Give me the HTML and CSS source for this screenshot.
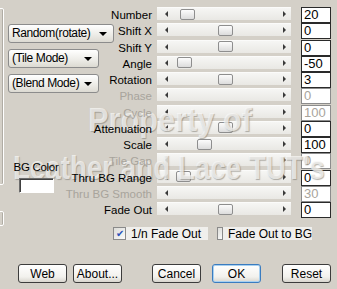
FILE: index.html
```html
<!DOCTYPE html>
<html lang="en">
<head>
    <meta charset="UTF-8">
    <title>Tile Settings</title>
    <link rel="stylesheet" href="styles.css">
</head>
<body>
<div class="dialog">
    <div class="main">
        <div class="left">
            <div class="edges">
                <div class="group group-top"></div>
                <div class="group group-bottom"></div>
            </div>
            <div class="controls">
                <div class="combo wide">Random(rotate)<span class="drop"></span></div>
                <div class="combo">(Tile Mode)<span class="drop"></span></div>
                <div class="combo">(Blend Mode)<span class="drop"></span></div>
                <div class="bgcolor">
                    <span class="bg-label">BG Color</span>
                    <div class="swatch"></div>
                </div>
            </div>
        </div>

        <div class="rows">
            <div class="row"><span class="label">Number</span><div class="track"><span class="arrow-l"></span><span class="thumb" style="margin-left:23px"></span><span class="arrow-r"></span></div><div class="value">20</div></div>
            <div class="row"><span class="label">Shift X</span><div class="track"><span class="arrow-l"></span><span class="thumb" style="margin-left:61px"></span><span class="arrow-r"></span></div><div class="value">0</div></div>
            <div class="row"><span class="label">Shift Y</span><div class="track"><span class="arrow-l"></span><span class="thumb" style="margin-left:61px"></span><span class="arrow-r"></span></div><div class="value">0</div></div>
            <div class="row"><span class="label">Angle</span><div class="track"><span class="arrow-l"></span><span class="thumb" style="margin-left:20px"></span><span class="arrow-r"></span></div><div class="value">-50</div></div>
            <div class="row"><span class="label">Rotation</span><div class="track"><span class="arrow-l"></span><span class="thumb" style="margin-left:61px"></span><span class="arrow-r"></span></div><div class="value">3</div></div>
            <div class="row off"><span class="label">Phase</span><div class="track"><span class="arrow-l"></span><span class="arrow-r"></span></div><div class="value">0</div></div>
            <div class="row off"><span class="label">Cycle</span><div class="track"><span class="arrow-l"></span><span class="arrow-r"></span></div><div class="value">100</div></div>
            <div class="row"><span class="label">Attenuation</span><div class="track"><span class="arrow-l"></span><span class="thumb" style="margin-left:61px"></span><span class="arrow-r"></span></div><div class="value">0</div></div>
            <div class="row"><span class="label">Scale</span><div class="track"><span class="arrow-l"></span><span class="thumb" style="margin-left:40px"></span><span class="arrow-r"></span></div><div class="value">100</div></div>
            <div class="row off"><span class="label">Tile Gap</span><div class="track"><span class="arrow-l"></span><span class="arrow-r"></span></div><div class="value">0</div></div>
            <div class="row"><span class="label">Thru BG Range</span><div class="track"><span class="arrow-l"></span><span class="thumb" style="margin-left:19px"></span><span class="arrow-r"></span></div><div class="value">0</div></div>
            <div class="row off"><span class="label">Thru BG Smooth</span><div class="track"><span class="arrow-l"></span><span class="arrow-r"></span></div><div class="value">30</div></div>
            <div class="row"><span class="label">Fade Out</span><div class="track"><span class="arrow-l"></span><span class="thumb" style="margin-left:61px"></span><span class="arrow-r"></span></div><div class="value">0</div></div>
        </div>
    </div>

    <div class="checks">
        <label class="check"><span class="box checked">&#10004;</span>1/n Fade Out</label>
        <label class="check"><span class="box"></span>Fade Out to BG</label>
    </div>

    <div class="buttons">
        <button class="btn web">Web</button>
        <button class="btn about">About...</button>
        <button class="btn cancel">Cancel</button>
        <button class="btn default">OK</button>
        <button class="btn">Reset</button>
    </div>

    <div class="watermark">
        <span class="wm-1">Property of</span>
        <span class="wm-2">Leather and Lace TUT's</span>
    </div>
</div>
</body>
</html>
```

FILE: styles.css
```css
body {
    margin: 0;
    background-color: #d4d0c8;
    font-family: "Liberation Sans", Arial, sans-serif;
    font-size: 11px;
    color: #000;
}
.dialog {
    position: relative;
    width: 337px;
    height: 289px;
    overflow: hidden;
}
.main {
    display: grid;
    grid-template-columns: 112px 1fr;
    height: 212px;
    padding-top: 7px;
}
.left {
    display: flex;
}
.edges {
    width: 8px;
    flex-shrink: 0;
}
.group {
    margin-left: -10px;
    width: 12px;
    border: 1px solid #fff;
    border-radius: 2px;
    box-shadow: inset -1px 0 0 #b0aca4;
}
.group-top {
    margin-top: 1px;
    height: 175px;
}
.group-bottom {
    margin-top: 26px;
    height: 13px;
}
.controls {
    display: flex;
    flex-direction: column;
    align-items: flex-start;
    padding-top: 17px;
}
.combo {
    position: relative;
    width: 86px;
    height: 17px;
    line-height: 17px;
    padding-left: 3px;
    margin-bottom: 6px;
    font-size: 12px;
    letter-spacing: -0.4px;
    border: 1px solid #8c8c8c;
    border-radius: 3px;
    background: linear-gradient(#ffffff, #ecebe6 60%, #dcdad2);
    white-space: nowrap;
}
.combo.wide {
    width: 101px;
}
.drop {
    position: absolute;
    right: 6px;
    top: 7px;
    border-left: 4px solid transparent;
    border-right: 4px solid transparent;
    border-top: 4px solid #000;
}
.bgcolor {
    display: flex;
    flex-direction: column;
    align-items: center;
    margin-top: 62px;
    margin-left: 9px;
    width: 38px;
}
.bg-label {
    position: relative;
    z-index: 2;
    font-size: 11.5px;
    letter-spacing: -0.3px;
    white-space: nowrap;
}
.swatch {
    position: relative;
    z-index: 2;
    margin-top: 5px;
    width: 33px;
    height: 13px;
    background: #fff;
    border: 1px solid;
    border-color: #6c6c6c #fff #fff #6c6c6c;
    box-shadow: inset 1px 1px 0 #404040;
}
.rows {
    display: flex;
    flex-direction: column;
}
.row {
    display: flex;
    align-items: center;
    height: 16.25px;
}
.label {
    position: relative;
    z-index: 2;
    width: 40px;
    display: flex;
    justify-content: flex-end;
    white-space: nowrap;
    font-size: 11.5px;
    margin-right: 5px;
}
.off .label {
    color: #a8a49c;
}
.track {
    position: relative;
    display: flex;
    align-items: center;
    width: 134px;
    height: 12px;
    margin-top: -3px;
    background: linear-gradient(#f6f6f4, #e9e8e4);
    border-top: 1px solid #fbfbfa;
}
.arrow-l {
    position: absolute;
    left: 8px;
    top: 3px;
    border-top: 3px solid transparent;
    border-bottom: 3px solid transparent;
    border-right: 3px solid #3a3a3a;
}
.arrow-r {
    position: absolute;
    right: 5px;
    top: 3px;
    border-top: 3px solid transparent;
    border-bottom: 3px solid transparent;
    border-left: 3px solid #3a3a3a;
}
.thumb {
    width: 13px;
    height: 9px;
    border: 1px solid #8e8e8e;
    border-radius: 2px;
    background: linear-gradient(#fcfcfc, #dcdcdc);
}
.value {
    margin-left: 10px;
    width: 26px;
    height: 14px;
    line-height: 14px;
    padding-left: 2px;
    font-size: 13px;
    background: #fff;
    border: 1px solid #2a2a2a;
}
.off .value {
    color: #a8a49c;
    border-color: #8c8c8c;
}
.checks {
    display: flex;
    gap: 9px;
    margin-top: 8px;
    margin-left: 113px;
}
.check {
    display: flex;
    align-items: center;
    width: 95px;
    height: 13px;
    background: #f0efec;
    font-size: 12px;
    white-space: nowrap;
}
.box {
    width: 11px;
    height: 11px;
    margin-right: 5px;
    border: 1px solid #8a8a8a;
    background: linear-gradient(135deg, #dcdcd8, #fafafa);
    font-size: 10px;
    line-height: 11px;
    text-align: center;
    color: #2a52b8;
}
.buttons {
    display: flex;
    margin-top: 24px;
    padding-left: 18px;
}
.btn {
    width: 49px;
    height: 19px;
    padding: 0;
    font-family: "Liberation Sans", Arial, sans-serif;
    font-size: 12px;
    border: 1px solid #3c3c3c;
    border-radius: 3px;
    background: linear-gradient(#ffffff, #f2f1ed 70%, #d8d5ce);
}
.btn.web {
    margin-right: 6px;
}
.btn.about {
    margin-right: 30px;
}
.btn.cancel {
    margin-right: 11px;
}
.btn.default {
    border-color: #3a7cc0;
    box-shadow: inset 0 0 0 1px #a8d0f0;
    margin-right: 21px;
}
.watermark {
    position: absolute;
    z-index: 1;
    left: 0;
    top: 0;
    width: 337px;
    height: 289px;
    pointer-events: none;
    font-family: "Liberation Sans", Arial, sans-serif;
    font-weight: bold;
    font-size: 33px;
    line-height: 1;
    white-space: nowrap;
    color: rgba(250, 249, 247, 0.72);
    text-shadow: 1px 1px 1px rgba(130, 126, 118, 0.6);
}
.wm-1 {
    position: absolute;
    left: 88px;
    top: 103px;
    transform: scaleX(0.93);
    transform-origin: left top;
}
.wm-2 {
    position: absolute;
    left: 13px;
    top: 151px;
    transform: scaleX(0.84);
    transform-origin: left top;
}
```
